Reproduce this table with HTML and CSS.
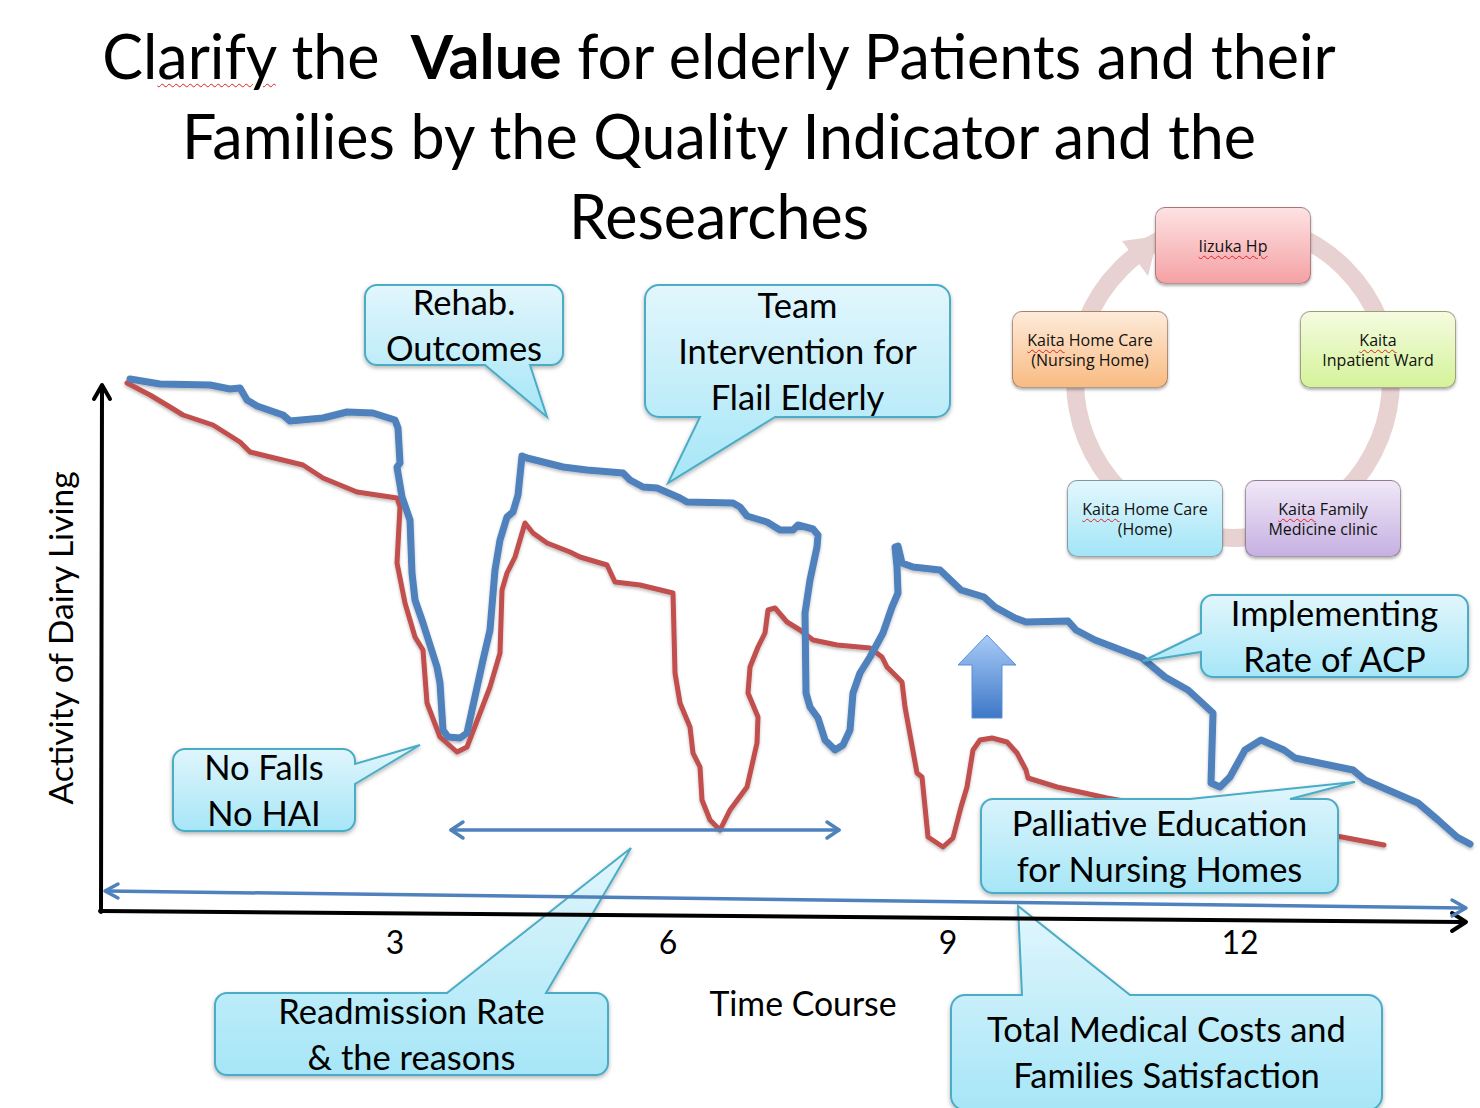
FILE: index.html
```html
<!DOCTYPE html>
<html lang="en">
<head>
<meta charset="utf-8">
<title>Clarify the Value</title>
<link rel="stylesheet" href="styles.css">
</head>
<body>
<div class="slide">
  <h1 class="title">Cl<span class="sq">arify</span> the&nbsp; <b>Value</b> for elderly Patients and their<br>Families by the Quality Indicator and the<br>Researches</h1>

  <div class="canvas">
    <svg class="plot" width="1480" height="1108" viewBox="0 0 1480 1108">
      <defs>
        <linearGradient id="cg" x1="0" y1="0" x2="0" y2="1">
          <stop offset="0" stop-color="#e2f6fc"/>
          <stop offset="1" stop-color="#a6e6f7"/>
        </linearGradient>
        <linearGradient id="ag" x1="0" y1="0" x2="0" y2="1">
          <stop offset="0" stop-color="#a9cbf8"/>
          <stop offset="1" stop-color="#3d78c6"/>
        </linearGradient>
        <filter id="sh" x="-10%" y="-10%" width="120%" height="130%">
          <feDropShadow dx="0" dy="2" stdDeviation="2" flood-color="#000" flood-opacity="0.3"/>
        </filter>
        <filter id="lsh" x="-5%" y="-5%" width="110%" height="110%">
          <feDropShadow dx="0" dy="2" stdDeviation="1.5" flood-color="#000" flood-opacity="0.25"/>
        </filter>
      </defs>

      <!-- cycle ring -->
      <circle cx="1233" cy="380" r="158" fill="none" stroke="#e8d1d1" stroke-width="18"/>
      <polygon points="1122,241 1158,236 1148,276" fill="#e8d1d1"/>

      <!-- curves -->
      <g class="curves" filter="url(#lsh)">
        <polyline class="red" points="127,383 150,395 170,407 183,415 213,425 240,442 250,452 303,465 323,478 357,492 397,498 400,507 397,563 405,603 415,637 423,650 427,703 440,737 457,752 467,747 490,687 500,653 502,590 507,573 515,557 525,523 533,533 547,543 570,552 580,557 607,565 615,582 640,585 673,593 675,673 680,703 690,727 693,753 700,767 702,800 710,820 720,830 730,810 747,787 757,743 758,717 748,693 750,667 758,647 765,633 768,610 775,608 787,622 800,630 813,640 837,645 870,648 882,657 887,667 902,682 905,707 917,773 922,777 928,837 943,847 953,838 961,807 967,787 973,750 980,740 992,738 1007,742 1017,753 1026,770 1028,778 1057,787 1107,798 1200,815 1342,837 1384,845"/>
        <polyline class="blue" points="130,379 160,384 210,385 230,389 240,388 247,400 257,406 283,415 290,421 323,418 347,412 373,413 395,420 398,428 400,463 397,467 402,497 410,520 412,573 415,600 423,623 437,667 440,683 443,730 448,737 460,738 467,733 483,660 490,630 495,570 500,540 507,517 513,512 518,495 522,456 527,458 543,462 563,467 587,470 623,473 630,480 643,487 657,488 680,498 687,502 733,503 740,507 747,516 767,522 780,530 793,530 798,525 813,529 818,535 817,547 810,580 805,613 806,693 810,707 818,718 825,740 835,750 843,745 850,730 853,693 860,673 870,657 883,633 892,607 898,593 897,567 895,547 898,546 902,563 913,567 940,570 961,590 984,597 995,607 1015,618 1026,622 1068,621 1076,630 1095,640 1142,658 1165,677 1188,690 1199,700 1213,713 1211,783 1220,787 1230,777 1245,750 1261,740 1284,750 1295,758 1353,770 1365,780 1395,793 1418,803 1438,820 1457,837 1470,844"/>
      </g>

      <!-- up arrow -->
      <polygon points="987,635 1016,665 1002,665 1002,718 972,718 972,665 958,665" fill="url(#ag)" stroke="#5a8fd8" stroke-width="1"/>

      <!-- callouts -->
      <g class="callouts" filter="url(#sh)">
        <path d="M377,285 H551 A12,12 0 0 1 563,297 V353 A12,12 0 0 1 551,365 H530 L547,417 L485,365 H377 A12,12 0 0 1 365,353 V297 A12,12 0 0 1 377,285 Z"/>
        <path d="M659,285 H936 A14,14 0 0 1 950,299 V403 A14,14 0 0 1 936,417 H775 L668,483 L700,417 H659 A14,14 0 0 1 645,403 V299 A14,14 0 0 1 659,285 Z"/>
        <path d="M185,749 H343 A12,12 0 0 1 355,761 V764 L420,745 L355,784 V819 A12,12 0 0 1 343,831 H185 A12,12 0 0 1 173,819 V761 A12,12 0 0 1 185,749 Z"/>
        <path d="M227,993 H447 L631,848 L546,993 H596 A12,12 0 0 1 608,1005 V1063 A12,12 0 0 1 596,1075 H227 A12,12 0 0 1 215,1063 V1005 A12,12 0 0 1 227,993 Z"/>
        <path d="M965,995 H1022 L1018,906 L1130,995 H1368 A14,14 0 0 1 1382,1009 V1096 A14,14 0 0 1 1368,1110 H965 A14,14 0 0 1 951,1096 V1009 A14,14 0 0 1 965,995 Z"/>
        <path d="M993,799 H1190 L1355,782 L1290,799 H1326 A12,12 0 0 1 1338,811 V881 A12,12 0 0 1 1326,893 H993 A12,12 0 0 1 981,881 V811 A12,12 0 0 1 993,799 Z"/>
        <path d="M1213,595 H1456 A12,12 0 0 1 1468,607 V665 A12,12 0 0 1 1456,677 H1213 A12,12 0 0 1 1201,665 V652 L1143,661 L1201,633 V607 A12,12 0 0 1 1213,595 Z"/>
      </g>

      <!-- axes -->
      <g class="axis">
        <line x1="101" y1="912" x2="102" y2="387"/>
        <polyline points="94,399 102,385 110,399"/>
        <line x1="100" y1="911" x2="1463" y2="922"/>
        <polyline points="1452,913 1466,922 1452,931"/>
      </g>
      <g class="barrow">
        <line x1="106" y1="891" x2="1464" y2="908"/>
        <polyline points="118,884 105,891 118,898"/>
        <polyline points="1452,900 1466,908 1452,916"/>
        <line x1="451" y1="830" x2="839" y2="830"/>
        <polyline points="463,822 451,830 463,838"/>
        <polyline points="827,822 839,830 827,838"/>
      </g>
    </svg>

    <div class="node n-iizuka"><span class="sq">Iizuka Hp</span></div>
    <div class="node n-inpatient"><span><span class="sq">Kaita</span><br>Inpatient Ward</span></div>
    <div class="node n-nursing"><span><span class="sq">Kaita</span> Home Care<br>(Nursing Home)</span></div>
    <div class="node n-home"><span><span class="sq">Kaita</span> Home Care<br>(Home)</span></div>
    <div class="node n-family"><span><span class="sq">Kaita</span> Family<br>Medicine clinic</span></div>

    <div class="callout c-rehab"><span>Rehab.</span><span>Outcomes</span></div>
    <div class="callout c-team"><span>Team</span><span>Intervention for</span><span>Flail Elderly</span></div>
    <div class="callout c-falls"><span>No Falls</span><span>No HAI</span></div>
    <div class="callout c-readm"><span>Readmission Rate</span><span>&amp; the reasons</span></div>
    <div class="callout c-total"><span>Total Medical Costs and</span><span>Families Satisfaction</span></div>
    <div class="callout c-pall"><span>Palliative Education</span><span>for Nursing Homes</span></div>
    <div class="callout c-acp"><span>Implementing</span><span>Rate of ACP</span></div>

    <div class="tick t3">3</div>
    <div class="tick t6">6</div>
    <div class="tick t9">9</div>
    <div class="tick t12">12</div>
    <div class="xlabel">Time Course</div>
    <div class="ylabel">Activity of Dairy Living</div>
  </div>
</div>
</body>
</html>
```

FILE: styles.css
```css
* { box-sizing: border-box; }
body { margin: 0; background: #fff; }

.slide {
  position: relative;
  width: 1480px;
  height: 1108px;
  overflow: hidden;
  background: #fff;
  color: #000;
  font-family: Lato, "Open Sans", sans-serif;
}

.title {
  margin: 0;
  width: 1438px;
  padding-top: 16px;
  font-size: 61px;
  line-height: 80px;
  font-weight: 400;
  text-align: center;
}
.title b { font-weight: 700; }

.sq {
  text-decoration: underline wavy #e02020;
  text-decoration-thickness: 1px;
  text-underline-offset: 4px;
}

.canvas { position: absolute; inset: 0; }
.plot { position: absolute; left: 0; top: 0; }

.curves polyline { fill: none; stroke-linejoin: round; stroke-linecap: round; }
.curves .red { stroke: #c0504d; stroke-width: 5; }
.curves .blue { stroke: #4f81bd; stroke-width: 7; }

.callouts path { fill: url(#cg); stroke: #4bacc6; stroke-width: 2; }

.axis line, .axis polyline { stroke: #000; stroke-width: 4; fill: none; stroke-linecap: round; stroke-linejoin: round; }
.barrow line, .barrow polyline { stroke: #4f81bd; stroke-width: 3.5; fill: none; stroke-linecap: round; stroke-linejoin: round; }

.node {
  position: absolute;
  width: 156px;
  height: 77px;
  border-radius: 10px;
  border: 1px solid rgba(80, 60, 60, 0.45);
  box-shadow: 0 2px 3px rgba(0, 0, 0, 0.3);
  display: flex;
  align-items: center;
  justify-content: center;
  text-align: center;
  font-family: "Open Sans", sans-serif;
  font-size: 16px;
  line-height: 20px;
  color: #111;
}
.node .sq { text-underline-offset: 3px; }
.n-iizuka { left: 1155px; top: 207px; background: linear-gradient(#fde2e3, #f5a1a4); }
.n-inpatient { left: 1300px; top: 311px; background: linear-gradient(#f5fbe0, #d4f39a); }
.n-nursing { left: 1012px; top: 311px; background: linear-gradient(#feebda, #f9bb82); }
.n-home { left: 1067px; top: 480px; background: linear-gradient(#e3f7fd, #a2e5f7); }
.n-family { left: 1245px; top: 480px; background: linear-gradient(#f0e8f7, #c6b0e2); }

.callout {
  position: absolute;
  display: flex;
  flex-direction: column;
  align-items: center;
  justify-content: center;
  font-size: 34.5px;
  line-height: 46px;
  text-align: center;
  white-space: nowrap;
}
.c-rehab { left: 365px; top: 285px; width: 198px; height: 80px; }
.c-team { left: 645px; top: 285px; width: 305px; height: 132px; }
.c-falls { left: 173px; top: 749px; width: 182px; height: 82px; }
.c-readm { left: 215px; top: 993px; width: 393px; height: 82px; }
.c-total { left: 951px; top: 995px; width: 431px; height: 113px; }
.c-pall { left: 981px; top: 799px; width: 357px; height: 94px; }
.c-acp { left: 1201px; top: 595px; width: 267px; height: 82px; }

.tick {
  position: absolute;
  top: 920px;
  width: 80px;
  margin-left: -40px;
  text-align: center;
  font-size: 32px;
  line-height: 44px;
}
.t3 { left: 395px; }
.t6 { left: 668px; }
.t9 { left: 948px; }
.t12 { left: 1240px; }

.xlabel {
  position: absolute;
  left: 693px;
  top: 981px;
  width: 220px;
  text-align: center;
  font-size: 33.8px;
  line-height: 44px;
}

.ylabel {
  position: absolute;
  left: 60px;
  top: 638px;
  transform: translate(-50%, -50%) rotate(-90deg);
  white-space: nowrap;
  font-size: 33.5px;
  line-height: 40px;
}
```
